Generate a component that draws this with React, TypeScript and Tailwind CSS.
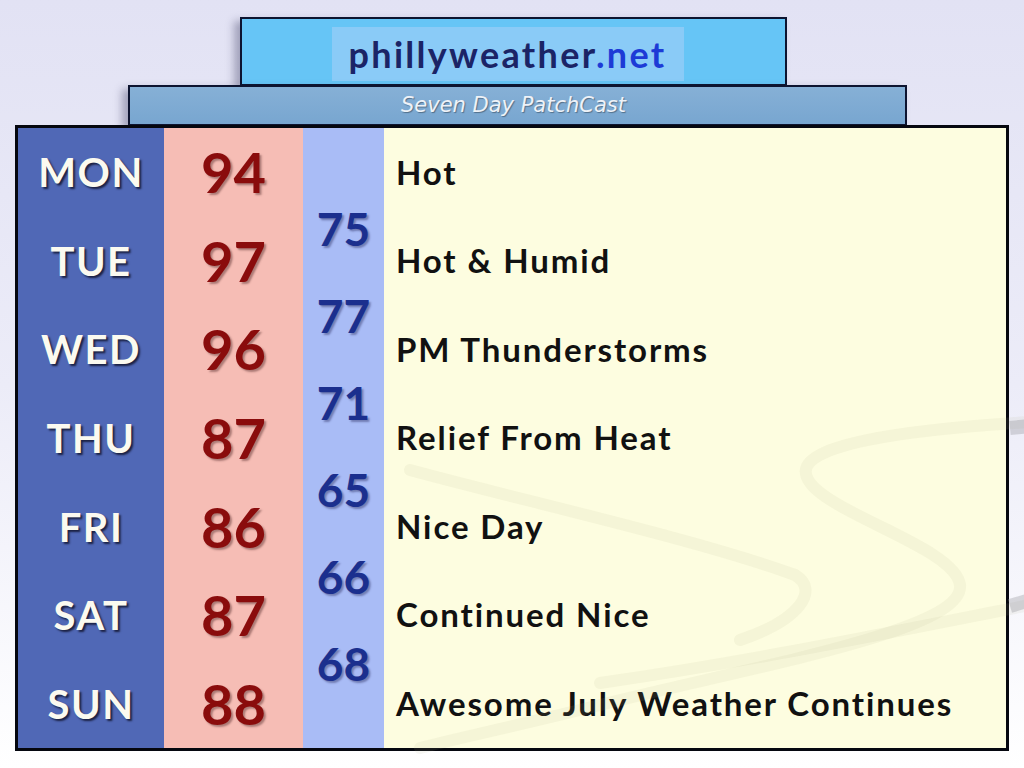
import React from 'react'

const days = [
  { day: 'MON', hi: 94, desc: 'Hot' },
  { day: 'TUE', hi: 97, desc: 'Hot & Humid' },
  { day: 'WED', hi: 96, desc: 'PM Thunderstorms' },
  { day: 'THU', hi: 87, desc: 'Relief From Heat' },
  { day: 'FRI', hi: 86, desc: 'Nice Day' },
  { day: 'SAT', hi: 87, desc: 'Continued Nice' },
  { day: 'SUN', hi: 88, desc: 'Awesome July Weather Continues' },
]

const lows = [75, 77, 71, 65, 66, 68]

const font = { fontFamily: 'Lato, "Open Sans", "Liberation Sans", sans-serif' }

// faint background swooshes
function Swirls() {
  return (
    <svg className="absolute inset-0 pointer-events-none" width="1024" height="768" viewBox="0 0 1024 768">
      <g fill="none" strokeLinecap="round" stroke="rgba(180,180,140,0.1)" strokeWidth="12">
        <path d="M1030 422 C 900 430, 800 445, 806 474 C 812 510, 955 545, 960 585 C 965 630, 760 665, 600 705 C 520 725, 450 740, 420 748" />
        <path d="M410 470 C 520 500, 700 540, 795 575 C 820 590, 800 620, 740 640" />
        <path d="M600 683 C 760 660, 900 630, 1030 605" />
      </g>
      <g fill="none" stroke="rgba(150,150,155,0.35)" strokeWidth="14">
        <path d="M1010 428 L1030 426" />
        <path d="M1010 606 L1030 600" />
      </g>
    </svg>
  )
}

export default function App() {
  return (
    <div className="relative w-[1024px] h-[768px] overflow-hidden bg-gradient-to-b from-[#e2e2f4] via-[#ececf8] to-white" style={font}>
      <div className="flex flex-col">
        <div className="ml-[240px] mt-[17px] w-[547px] h-[69px] bg-[#66c5f6] border-2 border-[#0d1430] shadow-[-6px_4px_8px_rgba(40,40,80,0.35)] flex items-center justify-center">
          <div className="w-[352px] h-[54px] mt-[4px] ml-[-12px] bg-[#8acbf7] flex items-center justify-center">
            <span className="text-[36px] font-bold tracking-[2.3px] text-[#1b2466] leading-none">
              phillyweather<span className="text-[#1d3bd6]">.net</span>
            </span>
          </div>
        </div>
        <div className="ml-[128px] w-[779px] h-[41px] -mt-[1px] bg-gradient-to-b from-[#86b0d6] to-[#78a6d0] border-2 border-[#0d1430] shadow-[-6px_4px_8px_rgba(40,40,80,0.35)] flex items-center justify-center">
          <span className="text-[21px] italic text-[#eef2f8] ml-[-8px] [text-shadow:1px_1px_1px_rgba(0,0,0,0.35)]" style={{ fontFamily: '"DejaVu Sans", sans-serif' }}>
            Seven Day PatchCast
          </span>
        </div>
        <div className="ml-[15px] w-[994px] h-[626px] -mt-[1px] border-[3px] border-[#05070f] flex">
          <div className="w-[146px] bg-[#5068b6] grid grid-rows-7">
            {days.map((d) => (
              <div key={d.day} className="flex items-center justify-center text-[40px] font-bold tracking-[1.5px] text-[#fbfaf0] [text-shadow:2px_2px_2px_rgba(10,10,30,0.75)]">
                {d.day}
              </div>
            ))}
          </div>
          <div className="w-[139px] bg-[#f6bdb5] grid grid-rows-7">
            {days.map((d) => (
              <div key={d.day} className="flex items-center justify-center text-[56px] font-bold text-[#8a0c0c] leading-none [text-shadow:2px_2px_2px_rgba(80,40,40,0.45)]">
                {d.hi}
              </div>
            ))}
          </div>
          <div className="w-[81px] bg-[#a9bcf6] flex flex-col pt-[57px]">
            {lows.map((l, i) => (
              <div key={i} className="h-[87px] flex items-center justify-center text-[46px] font-bold text-[#1b2f8e] leading-none [text-shadow:2px_2px_2px_rgba(30,30,80,0.4)]">
                {l}
              </div>
            ))}
          </div>
          <div className="flex-1 bg-[#fdfde0] grid grid-rows-7 pl-[12px]">
            {days.map((d) => (
              <div key={d.day} className="flex items-center text-[33px] font-bold text-[#111111] tracking-[1.9px]">
                {d.desc}
              </div>
            ))}
          </div>
        </div>
      </div>
      <Swirls />
    </div>
  )
}
